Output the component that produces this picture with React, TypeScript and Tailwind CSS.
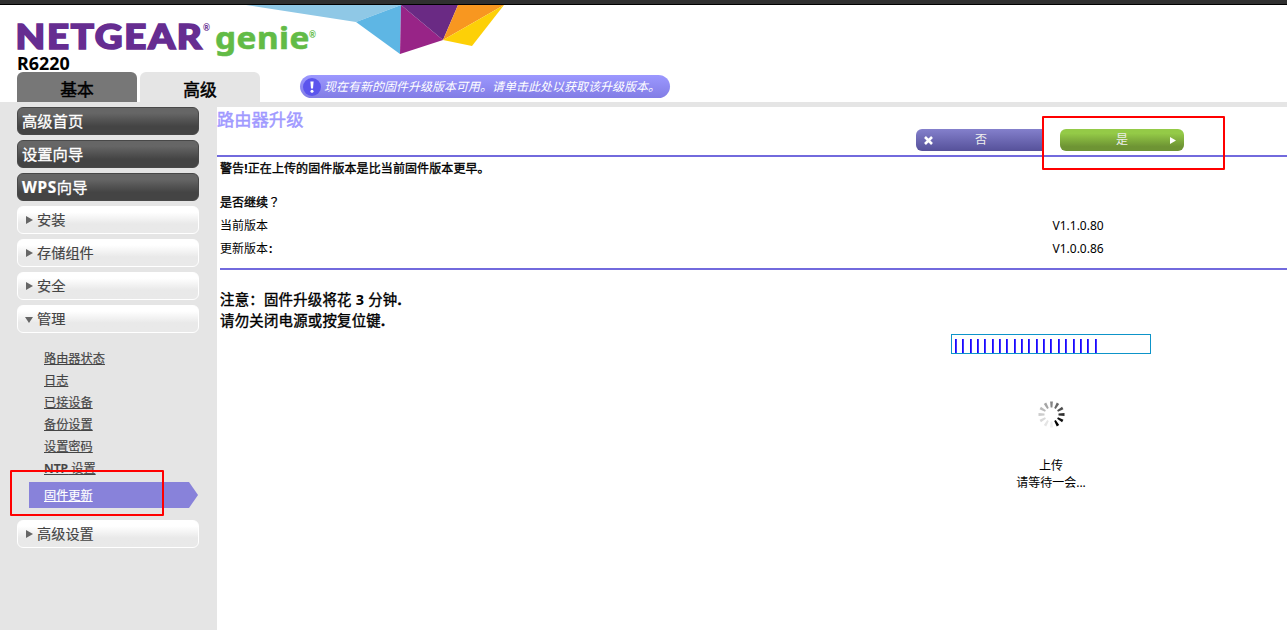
import type { ReactNode } from "react";

function Logo() {
  return (
    <svg className="block h-[50px] w-[520px] overflow-visible" viewBox="0 5 520 50">
      <polygon points="246,5 401,5 356,22" fill="#8fc8e6" />
      <polygon points="401,5 400,54 356,22" fill="#5eb6e4" />
      <polygon points="401,5 443,40 400,54" fill="#982487" />
      <polygon points="401,5 458,5 443,40" fill="#6a2a84" />
      <polygon points="458,5 504,5 443,40" fill="#f89720" />
      <polygon points="504,5 472,46 443,40" fill="#fdd007" />
      <text x="15.5" y="49.2" textLength="188" lengthAdjust="spacingAndGlyphs" letterSpacing="1.6" fontFamily="Lato, sans-serif" fontWeight="900" fontSize="34.5" fill="#662d91" stroke="#662d91" strokeWidth="1.7">NETGEAR</text>
      <text x="203" y="31" fontFamily="Lato, sans-serif" fontWeight="700" fontSize="8.5" fill="#662d91">®</text>
      <text x="215" y="48.7" textLength="95" lengthAdjust="spacingAndGlyphs" letterSpacing="0.5" fontFamily="'Noto Sans', sans-serif" fontWeight="700" fontSize="31" fill="#62bb46" stroke="#62bb46" strokeWidth="0.6">genie</text>
      <text x="309" y="38" fontFamily="Lato, sans-serif" fontWeight="700" fontSize="8.5" fill="#62bb46">®</text>
    </svg>
  );
}

function DarkItem({ children }: { children: ReactNode }) {
  return (
    <div className="flex h-7 w-[182px] items-center rounded-md border border-[#484848] bg-linear-to-b from-[#666] from-20% to-[#444] to-70% pl-1 text-[15.3px] font-normal text-white [-webkit-text-stroke:0.3px_white]">
      {children}
    </div>
  );
}

function LightItem({ children, open = false }: { children: ReactNode; open?: boolean }) {
  return (
    <div className="flex h-7 w-[182px] items-center rounded-md border border-white bg-linear-to-b from-white from-20% to-[#e9e9e9] to-65% pb-px pl-[7px] text-[14.2px] font-normal text-[#444] [-webkit-text-stroke:0.15px_#444]">
      <svg className="mr-1 size-2" viewBox="0 0 8 8" fill="#666">
        {open ? <path d="M0 2h8L4 8z" /> : <path d="M1 0v8l7-4z" />}
      </svg>
      {children}
    </div>
  );
}

const links = ["路由器状态", "日志", "已接设备", "备份设置", "设置密码"];
const spokes = ["#858585", "#686868", "#4d4d4d", "#303030", "#111", "#000", "#eee", "#e5e5e5", "#d9d9d9", "#ccc", "#bbb", "#a5a5a5"];

export default function App() {
  return (
    <div className="relative flex h-[630px] w-[1287px] flex-col overflow-hidden bg-white font-['Noto_Sans','Noto_Sans_CJK_SC',sans-serif] text-[12px] text-black">
      <div className="h-[5px] shrink-0 border-b border-black bg-[#303030]" />
      <header className="h-[97px] shrink-0">
        <Logo />
        <div className="h-[17px] pl-[17px] text-[17.9px] leading-[17px] font-bold">R6220</div>
        <div className="flex h-[30px] pl-[17px] text-[16.8px] font-normal">
          <div className="flex h-[30px] w-[120px] items-center justify-center rounded-t-md bg-[#777] pt-1.5 [-webkit-text-stroke:0.5px_black]">基本</div>
          <div className="ml-[3px] flex h-[30px] w-[120px] items-center justify-center rounded-t-md bg-[#e5e5e5] pt-1.5 [-webkit-text-stroke:0.5px_black]">高级</div>
          <div className="mt-[3px] ml-10 flex h-[23px] w-[370px] items-center rounded-full bg-linear-to-b from-[#9c98ff] to-[#827de5] pl-[3px] text-[12px] font-normal whitespace-nowrap text-white italic">
            <svg className="mr-[3px] size-[18px] shrink-0" viewBox="0 0 18 18">
              <circle cx="9" cy="9" r="9" fill="#5c55ed" />
              <path d="M7.4 3.5h3.2l-.6 7H8z" fill="white" />
              <circle cx="9" cy="13.2" r="1.5" fill="white" />
            </svg>
            现在有新的固件升级版本可用。请单击此处以获取该升级版本。
          </div>
        </div>
      </header>
      <div className="h-[5px] shrink-0 bg-[#e5e5e5]" />
      <div className="flex h-[523px]">
        <nav className="w-[217px] shrink-0 bg-[#e5e5e5] pl-[17px]">
          <div className="flex flex-col gap-[5px]">
            <DarkItem>高级首页</DarkItem>
            <DarkItem>设置向导</DarkItem>
            <DarkItem><span className="font-bold tracking-[0.7px] [-webkit-text-stroke:0.2px_white]">WPS</span>向导</DarkItem>
            <LightItem>安装</LightItem>
            <LightItem>存储组件</LightItem>
            <LightItem>安全</LightItem>
            <LightItem open>管理</LightItem>
          </div>
          <ul className="mt-[15px] pl-[27px] text-[12.2px] font-normal text-[#444] [-webkit-text-stroke:0.15px_#444]">
            {links.map((l) => (
              <li key={l} className="h-[22px] leading-[22px] underline">{l}</li>
            ))}
            <li className="h-[22px] leading-[22px] underline"><span className="font-semibold">NTP</span> 设置</li>
          </ul>
          <div className="mt-0.5 ml-3 flex h-[26px] w-[169px] items-center bg-[#8882da] pt-0.5 pl-[15px] text-[12.2px] font-normal text-white underline [-webkit-text-stroke:0.15px_white] [clip-path:polygon(0_0,160px_0,169px_50%,160px_100%,0_100%)]">
            固件更新
          </div>
          <div className="mt-3">
            <LightItem>高级设置</LightItem>
          </div>
        </nav>
        <main className="flex w-[1070px] flex-col">
          <div className="flex h-[50px] shrink-0 border-b-2 border-[#726add]">
            <h1 className="w-[699px] text-[17.3px] leading-[26px] font-normal text-[#a099ff] [-webkit-text-stroke:0.45px_#a099ff]">路由器升级</h1>
            <div className="mt-[22px] flex h-[22px] w-[127px] items-center rounded-l-md bg-linear-to-b from-[#8480cc] to-[#56519a] text-[12px] text-[#eee]">
              <svg className="ml-2 size-[9px]" viewBox="0 0 9 9" stroke="white" strokeWidth="2.6">
                <path d="M1 1l7 7M8 1L1 8" />
              </svg>
              <span className="ml-[42px]">否</span>
            </div>
            <div className="mt-[22px] ml-[17px] flex h-[22px] w-[124px] items-center rounded-md bg-linear-to-b from-[#94ca47] from-20% to-[#6e9434] to-80% text-[12px] text-[#eee]">
              <span className="ml-14">是</span>
              <svg className="ml-[42px] size-[7px]" viewBox="0 0 7 7" fill="white"><path d="M0 0v7l6-3.5z" /></svg>
            </div>
          </div>
          <div className="ml-[3px] h-[113px] shrink-0 border-b-2 border-[#726add]">
            <p className="h-[34px] leading-6 tracking-[0.1px] [-webkit-text-stroke:0.35px_black]">警告<b className="[-webkit-text-stroke:0]">!</b>正在上传的固件版本是比当前固件版本更早。</p>
            <p className="h-[23px] leading-6 [-webkit-text-stroke:0.35px_black]">是否继续<span className="leading-none font-['Noto_Sans_CJK_TC',sans-serif] [-webkit-text-stroke:0.2px_black]" lang="zh-TW">？</span></p>
            <div className="flex h-[23px] leading-6">
              <span className="w-[832.5px]">当前版本</span><span>V1.1.0.80</span>
            </div>
            <div className="flex h-[23px] leading-6">
              <span className="w-[832.5px]">更新版本<b className="ml-px">:</b></span><span>V1.0.0.86</span>
            </div>
          </div>
          <div className="mt-[19px] ml-[3px] text-[14.4px] leading-[21px] tracking-[0.24px] [-webkit-text-stroke:0.4px_black]">
            <p>注意：固件升级将花 <b className="[-webkit-text-stroke:0]">3</b> 分钟<b>.</b></p>
            <p>请勿关闭电源或按复位键<b>.</b></p>
          </div>
          <div className="mt-[3px] ml-[734px] flex w-[200px] flex-col items-center">
            <div className="flex h-5 w-[200px] items-end gap-[5.35px] border border-[#0d94c9] pl-[3px]">
              {Array.from({ length: 20 }, (_, i) => (
                <svg key={i} className="h-[14px] w-[2px] shrink-0" viewBox="0 0 2 14"><rect width="1.8" height="14" fill="#1a08ff" /></svg>
              ))}
            </div>
            <svg className="mt-[47px] h-[27px] w-[27px]" viewBox="-13.5 -13.5 27 27">
              {spokes.map((c, i) => (
                <path key={c} d="M-1.4 -13h2.8l-.5 6h-1.8z" fill={c} transform={`rotate(${i * 30})`} />
              ))}
            </svg>
            <p className="mt-[29px] leading-[17px]">上传</p>
            <p className="leading-[17px]">请等待一会...</p>
          </div>
        </main>
      </div>
      <div className="absolute top-[116px] left-[1042px] h-[54px] w-[183px] rounded-[1px] border-2 border-[#f00]" />
      <div className="absolute top-[470px] left-[10px] h-[46px] w-[154px] rounded-[1px] border-2 border-[#f00]" />
    </div>
  );
}
